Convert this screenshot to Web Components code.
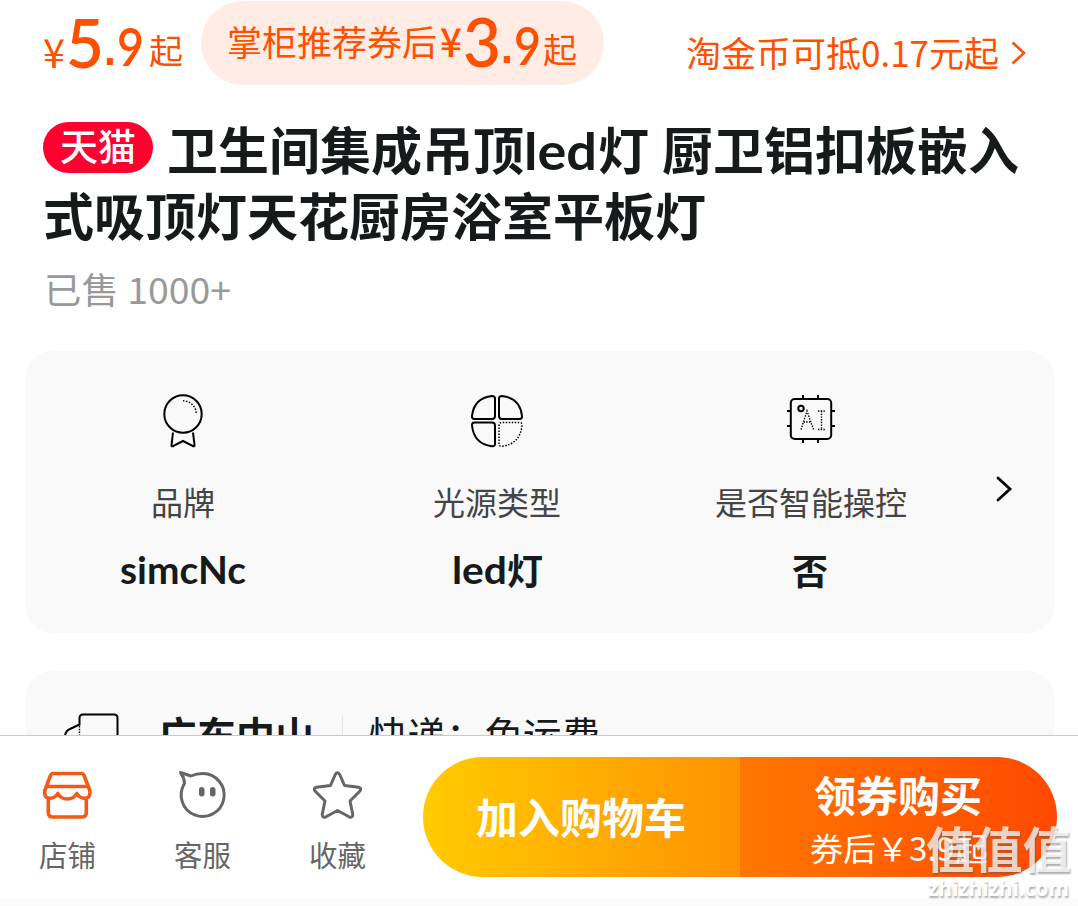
<!DOCTYPE html>
<html lang="zh-CN">
<head>
<meta charset="utf-8">
<title>商品详情</title>
<style>
html,body{margin:0;padding:0;background:#fff}
body{width:1078px;height:906px;overflow:hidden;font-family:"Noto Sans CJK SC",sans-serif;color:#161a1b}
</style>
</head>
<body>
<product-page></product-page>
<script>
// <type-run size weight w>: one line of text, condensed or widened to the width w.
class TypeRun extends HTMLElement{
  connectedCallback(){
    if(this.shadowRoot)return;
    const s=this.getAttribute('size'),wt=this.getAttribute('weight')||400,w=this.getAttribute('w');
    const r=this.attachShadow({mode:'open'});
    r.innerHTML=`<style>:host{display:block;flex:none;width:${w}px;height:${s}px;white-space:pre}
      span{display:inline-block;font-size:${s}px;line-height:${s}px;font-weight:${wt};transform-origin:0 0;white-space:pre}</style><span><slot></slot></span>`;
    const span=r.querySelector('span');
    const n=span.getBoundingClientRect().width;
    if(n)span.style.transform=`scaleX(${w/n})`;
  }
}

class PriceHeader extends HTMLElement{
  constructor(){super();this.attachShadow({mode:'open'}).innerHTML=`
  <style>
  :host{display:flex;height:122px;align-items:flex-start;color:#ff5000;box-sizing:border-box;padding-left:43px}
  .price{display:flex;width:158px;align-items:flex-start}
  .pill{display:flex;align-items:flex-start;box-sizing:border-box;width:403px;height:84px;margin-top:1px;border-radius:42px;background:#ffece5;padding-left:26px}
  .coin{display:flex;margin-left:82px;align-items:flex-start}
  .d{font-family:Lato,sans-serif}
  .p{font-family:"Liberation Sans",sans-serif}
  svg{margin:41px 0 0 12px}
  </style>
  <div class="price">
    <type-run size="40" weight="400" w="22" style="margin-top:31px">¥</type-run>
    <type-run class="d" size="68" weight="600" w="38" style="margin:8px 0 0 1px">5</type-run>
    <type-run class="p" size="46" weight="700" w="12" style="margin:26px 0 0 0">.</type-run>
    <type-run class="d" size="51" weight="600" w="27" style="margin:21px 0 0 1px">9</type-run>
    <type-run size="34" w="34" style="margin:33px 0 0 5px">起</type-run>
  </div>
  <div class="pill">
    <type-run size="35" w="210" style="margin-top:22px">掌柜推荐券后</type-run>
    <type-run size="40" weight="500" w="22" style="margin:19px 0 0 3px">¥</type-run>
    <type-run class="d" size="68" weight="600" w="38" style="margin:6px 0 0 1px">3</type-run>
    <type-run class="p" size="46" weight="700" w="12" style="margin:23px 0 0 0">.</type-run>
    <type-run class="d" size="51" weight="600" w="27" style="margin:19px 0 0 1px">9</type-run>
    <type-run size="34" w="34" style="margin:31px 0 0 2px">起</type-run>
  </div>
  <div class="coin">
    <type-run size="35" w="313" style="margin-top:34px">淘金币可抵0.17元起</type-run>
    <svg width="16" height="24" viewBox="0 0 16 24" fill="none" stroke="#ff5000" stroke-width="2.6"><path d="M1.500 1.500 13 12 1.500 22.500"/></svg>
  </div>`}
}

class TmallBadge extends HTMLElement{
  constructor(){super();this.attachShadow({mode:'open'}).innerHTML=`
  <style>:host{display:flex;flex:none;box-sizing:border-box;width:110px;height:51px;border-radius:26px;background:#ff0030;color:#fff;padding:5px 0 0 17px}</style>
  <type-run size="37" weight="500" w="76">天猫</type-run>`}
}

class ProductTitle extends HTMLElement{
  constructor(){super();this.attachShadow({mode:'open'}).innerHTML=`
  <style>
  :host{display:block;padding-left:43px;height:229px;box-sizing:border-box}
  .l1{display:flex;height:67px}
  .l1 type-run{margin-top:1px}
  .sold{color:#999;margin-top:20px;display:flex}
  .la{font-family:Lato,sans-serif}
  </style>
  <div class="l1"><tmall-badge></tmall-badge>
    <type-run size="51" weight="700" w="357" style="margin-left:14px">卫生间集成吊顶</type-run>
    <type-run class="la" size="52" weight="700" w="73" style="margin:2px 1px 0 0">led</type-run>
    <type-run size="51" weight="700" w="51">灯</type-run>
    <type-run size="51" weight="700" w="357" style="margin-left:13px">厨卫铝扣板嵌入</type-run>
  </div>
  <type-run size="51" weight="700" w="663">式吸顶灯天花厨房浴室平板灯</type-run>
  <div class="sold">
    <type-run size="36" w="187" style="margin-left:1px;margin-top:10px">已售 1000+</type-run>
  </div>`}
}

class SpecItem extends HTMLElement{
  constructor(){super();this.attachShadow({mode:'open'}).innerHTML=`
  <style>
  :host{display:flex;flex-direction:column;align-items:center;width:314px;flex:none}
  .i{height:94px;display:flex}
  .l{color:#444;height:66px}
  </style>
  <div class="i"><slot name="icon"></slot></div><div class="l"><slot name="label"></slot></div><slot></slot>`}
}

class SpecCard extends HTMLElement{
  constructor(){super();this.attachShadow({mode:'open'}).innerHTML=`
  <style>
  :host{display:flex;margin:0 24px 0 26px;height:282px;border-radius:26px;background:#f9f9f9;box-sizing:border-box;padding-top:40px}
  svg{display:block;overflow:visible}
  .go{margin:85px 0 0 27px}
  .la{font-family:Lato,sans-serif}
  .v{display:flex}
  </style>
  <spec-item>
    <svg slot="icon" width="54" height="60" viewBox="0 0 54 60" fill="none" stroke="#000" stroke-width="2"><circle cx="27" cy="23" r="18.7"/><path d="M17 41.500 15.500 54q-.2 1.800 1.500 1.200L27 50 37 55.200q1.700.6 1.500-1.200L37 41.500" /><path d="M27 9.800a13.300 13.300 0 0 1 13.300 13.300" stroke-width="1.500" stroke-dasharray="1.500 1.500"/></svg>
    <type-run slot="label" size="32" w="64">品牌</type-run>
    <type-run class="la" size="38" weight="700" w="126" style="margin:-1px 1px 0 0">simcNc</type-run>
  </spec-item>
  <spec-item>
    <svg slot="icon" width="54" height="60" viewBox="0 0 54 60" fill="none" stroke="#000" stroke-width="2"><path d="M25 7.500V25q0 3-3 3H4.500Q1.800 28 2 25 4 7 22 5q3 0 3 2.500Z"/><path d="M29 7.500V25q0 3 3 3H49.500q2.700 0 2.500-3Q50 7 32 5q-3 0-3 2.500Z"/><path d="M25 53V34.500q0-3-3-3H4.500Q1.800 31.500 2 34.500 4 53 22 55.300 25 55.500 25 53Z"/><path d="M29 53V34.500q0-3 3-3H49.500q2.700 0 2.500 3Q50 53 32 55.300 29 55.500 29 53Z" stroke-width="1.500" stroke-dasharray="1.500 1.500"/></svg>
    <type-run slot="label" size="32" w="128">光源类型</type-run>
    <div class="v"><type-run class="la" size="38" weight="700" w="55" style="margin-top:-1px">led</type-run><type-run size="36" weight="700" w="36">灯</type-run></div>
  </spec-item>
  <spec-item>
    <svg slot="icon" width="54" height="60" viewBox="0 0 54 60" fill="none" stroke="#000" stroke-width="2"><rect x="6.800" y="8" width="40.400" height="40" rx="4"/><path d="M19 8V4M34 8V4M19 48v4M34 48v4M6 20H3M6 35H3M48 20h3M48 35h3"/><circle cx="17" cy="17.500" r="2.700"/><path d="M17 38.500 23 20 29.500 38.500M19.500 31H27M34 20h7M37.500 20V38M34 38.500h7" stroke-width="1.400" stroke-dasharray="1.400 1.300"/></svg>
    <type-run slot="label" size="32" w="192">是否智能操控</type-run>
    <type-run size="36" weight="700" w="36" style="margin-right:2px">否</type-run>
  </spec-item>
  <svg class="go" width="20" height="28" viewBox="0 0 20 28" fill="none" stroke="#000" stroke-width="2.800" stroke-linecap="round"><path d="M3 2 15 13 3 24"/></svg>`}
}

class ShippingCard extends HTMLElement{
  constructor(){super();this.attachShadow({mode:'open'}).innerHTML=`
  <style>
  :host{display:flex;margin:38px 24px 0 26px;height:64px;overflow:hidden;border-radius:26px 26px 0 0;background:#f9f9f9;box-sizing:border-box;padding:42px 0 0 36px}
  i{width:1px;height:40px;background:#e4e4e4;margin:3px 26px 0 28px}
  svg{flex:none}
  </style>
  <svg width="60" height="40" viewBox="0 0 60 40" fill="none" stroke="#000" stroke-width="2"><path d="M3 30V24Q3 18 8 16L17.500 11.500V5q0-3.500 3.500-3.500H52q3.500 0 3.500 3.500V34"/><path d="M17.500 13V34" stroke-width="1.400" stroke-dasharray="1.400 1.400"/></svg>
  <type-run size="39" weight="700" w="156" style="margin:1px 0 0 36px">广东中山</type-run><i></i>
  <type-run size="39" w="231" style="margin-top:1px">快递：免运费</type-run>`}
}

class NavAction extends HTMLElement{
  constructor(){super();this.attachShadow({mode:'open'}).innerHTML=`
  <style>:host{display:flex;flex-direction:column;align-items:center;width:135px;flex:none;color:#666}
  .i{height:70px}</style>
  <div class="i"><slot name="icon"></slot></div><slot></slot>`}
}

class BuyButtons extends HTMLElement{
  constructor(){super();this.attachShadow({mode:'open'}).innerHTML=`
  <style>
  :host{display:flex;width:634px;height:120px;border-radius:60px;overflow:hidden;color:#fff;margin:21px 0 0 18px}
  .a{width:317px;background:linear-gradient(90deg,#ffcb00,#ff9202);box-sizing:border-box;padding:38px 0 0 53px}
  .b{width:317px;background:linear-gradient(90deg,#ff7700,#ff4900);box-sizing:border-box;padding:16px 0 0 70px}
  </style>
  <div class="a"><type-run size="42" weight="700" w="210">加入购物车</type-run></div>
  <div class="b"><type-run size="42" weight="700" w="168" style="margin-left:4px">领券购买</type-run>
  <type-run size="32" w="178" style="margin-top:16px">券后￥3.9起</type-run></div>`}
}

class SiteMark extends HTMLElement{
  constructor(){super();this.attachShadow({mode:'open'}).innerHTML=`
  <style>
  :host{position:absolute;left:926px;top:822px;width:148px;color:rgba(255,255,255,.74);text-shadow:1px 2px 2px rgba(90,90,90,.5)}
  .u{font-family:"Open Sans",sans-serif}
  </style>
  <type-run size="49" weight="700" w="145">值值值</type-run>
  <type-run class="u" size="22" weight="700" w="141" style="margin:5px 0 0 2px;color:#fff">zhizhizhi.com</type-run>`}
}

class BottomBar extends HTMLElement{
  constructor(){super();this.attachShadow({mode:'open'}).innerHTML=`
  <style>
  :host{display:block;position:relative;height:171px;background:linear-gradient(#fff 161px,#fbfbfb 163px);border-top:1px solid #c9c9c9;box-sizing:border-box}
  .r{display:flex}
  nav-action{padding-top:34px}
  svg{display:block;overflow:visible}
  </style>
  <div class="r">
    <nav-action>
      <svg slot="icon" width="52" height="50" viewBox="0.700 0 52 50" fill="none" stroke="#f25a16" stroke-width="3.600" stroke-linejoin="round"><path d="M11.500 3.500H40.500Q42 3.500 43 6L48.500 20.500Q50 28 43 28.200 38 28 35.500 23.500 32.500 29 26 29T16.500 23.500Q14 28 9 28.200 2 28 3.500 20.500L9 6Q10 3.500 11.500 3.500ZM4.500 16.500H47.500M7 28.500V42.500q0 4.500 4.500 4.500H40.500q4.500 0 4.500-4.500V28.500"/></svg>
      <type-run size="29" w="57">店铺</type-run></nav-action>
    <nav-action>
      <svg slot="icon" width="52" height="50" viewBox="1 0 52 50" fill="none" stroke="#666" stroke-width="3" stroke-linejoin="round"><path d="M4.500 2.500 15 6Q20 3.500 27 3.500A21.500 21.500 0 1 1 8.500 13.500Q8.500 8 4.500 2.500Z"/><g fill="#666" stroke="none"><rect x="23" y="17" width="5.500" height="9.500" rx="2.700"/><rect x="34" y="17" width="5.500" height="9.500" rx="2.700"/></g></svg>
      <type-run size="29" w="57">客服</type-run></nav-action>
    <nav-action>
      <svg slot="icon" width="52" height="50" viewBox="0 0 52 50" fill="none" stroke="#666" stroke-width="3" stroke-linejoin="round"><path d="M23.300 4.500Q25.500 1 27.700 4.500L32.500 15.500 46.500 17.300Q50.500 18.500 47.500 21.500L38 31 40.800 44.500Q40.500 48.500 37 46.800L25.500 40.500 14 46.800Q10.500 48.500 10.200 44.500L13 31 3.500 21.500Q.5 18.500 4.500 17.300L18.500 15.500Z"/></svg>
      <type-run size="29" w="57">收藏</type-run></nav-action>
    <buy-buttons></buy-buttons>
  </div>`}
}

class ProductPage extends HTMLElement{
  constructor(){super();this.attachShadow({mode:'open'}).innerHTML=`
  <style>:host{display:block;position:relative;width:1078px;height:906px;overflow:hidden;background:#fff}</style>
  <price-header></price-header><product-title></product-title><spec-card></spec-card><shipping-card></shipping-card><bottom-bar></bottom-bar><site-mark></site-mark>`}
}
for(const [n,c] of [['product-page',ProductPage],['price-header',PriceHeader],['tmall-badge',TmallBadge],['product-title',ProductTitle],['spec-item',SpecItem],['spec-card',SpecCard],['shipping-card',ShippingCard],['nav-action',NavAction],['buy-buttons',BuyButtons],['bottom-bar',BottomBar],['site-mark',SiteMark],['type-run',TypeRun]])customElements.define(n,c);
</script>
</body>
</html>
